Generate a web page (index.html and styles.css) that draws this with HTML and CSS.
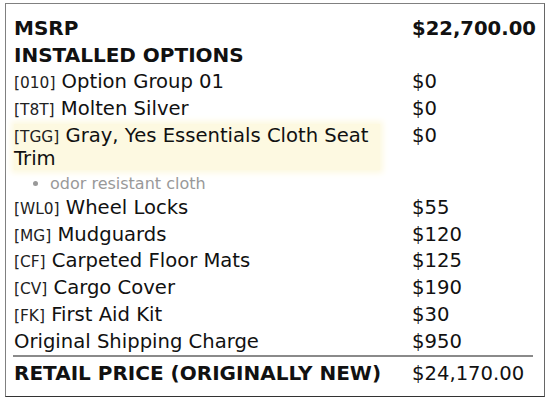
FILE: index.html
```html
<!DOCTYPE html>
<html>
<head>
<meta charset="utf-8">
<link rel="stylesheet" href="styles.css">
</head>
<body>
<div class="box">
  <table class="price-table">
    <colgroup><col class="col-label"><col class="col-price"></colgroup>
    <tr class="head">
      <td class="label">MSRP</td>
      <td class="price">$22,700.00</td>
    </tr>
    <tr class="head">
      <td class="label" colspan="2">INSTALLED OPTIONS</td>
    </tr>
    <tr>
      <td class="label"><span class="code">[010]</span> Option Group 01</td>
      <td class="price">$0</td>
    </tr>
    <tr>
      <td class="label"><span class="code">[T8T]</span> Molten Silver</td>
      <td class="price">$0</td>
    </tr>
    <tr>
      <td class="label"><div class="hl"><span class="code">[TGG]</span> Gray, Yes Essentials Cloth Seat Trim</div>
        <ul class="notes"><li>odor resistant cloth</li></ul>
      </td>
      <td class="price">$0</td>
    </tr>
    <tr>
      <td class="label"><span class="code">[WL0]</span> Wheel Locks</td>
      <td class="price">$55</td>
    </tr>
    <tr>
      <td class="label"><span class="code">[MG]</span> Mudguards</td>
      <td class="price">$120</td>
    </tr>
    <tr>
      <td class="label"><span class="code">[CF]</span> Carpeted Floor Mats</td>
      <td class="price">$125</td>
    </tr>
    <tr>
      <td class="label"><span class="code">[CV]</span> Cargo Cover</td>
      <td class="price">$190</td>
    </tr>
    <tr>
      <td class="label"><span class="code">[FK]</span> First Aid Kit</td>
      <td class="price">$30</td>
    </tr>
    <tr>
      <td class="label">Original Shipping Charge</td>
      <td class="price">$950</td>
    </tr>
    <tr class="total">
      <td class="label">RETAIL PRICE (ORIGINALLY NEW)</td>
      <td class="price">$24,170.00</td>
    </tr>
  </table>
</div>
</body>
</html>
```
FILE: styles.css
```css
html, body {
  margin: 0;
  padding: 0;
  background: #fff;
}
body {
  font-family: "DejaVu Sans", sans-serif;
  color: #111;
}
.box {
  margin: 3px 0 0 5px;
  width: 540px;
  height: 394px;
  border: 1px solid #808080;
  border-bottom-color: #333;
  border-right-color: #666;
  padding: 11px 0 0 7px;
  box-sizing: border-box;
}
.price-table {
  border-collapse: collapse;
  table-layout: fixed;
  width: 520px;
  font-size: 19.6px;
  line-height: 23px;
}
.col-label {
  width: 399px;
}
.col-price {
  width: 121px;
}
.price-table td {
  padding: 1.9px 0 1.9px 1px;
  vertical-align: top;
  white-space: nowrap;
}
.price-table td.label {
  white-space: normal;
  padding-right: 28px;
}
.price-table td.price {
  padding-left: 0;
}
.head td {
  font-weight: bold;
}
.head td.label,
.total td.label {
  font-size: 20px;
}
.code {
  font-size: 15.4px;
  line-height: 16px;
  color: #222;
}
.hl {
  background: #fdf9e1;
  box-shadow: 0 0 6px 3px #fdf9e1;
  margin-right: 4px;
}
.notes {
  margin: 6px 0 0 0;
  padding-left: 36px;
  font-size: 16px;
  line-height: 16px;
  color: #999;
}
.total td {
  border-top: 2px solid #8a8a8a;
  padding-top: 5px;
}
.total .label {
  font-weight: bold;
}
```
